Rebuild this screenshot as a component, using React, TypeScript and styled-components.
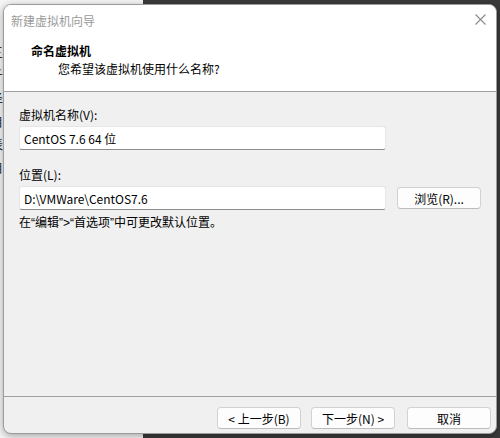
import styled, { createGlobalStyle } from "styled-components";

const GlobalStyle = createGlobalStyle`
  html, body {
    margin: 0;
    padding: 0;
    background: #3b3b3b;
  }
  body {
    font-family: "Noto Sans CJK SC", "Noto Sans", sans-serif;
    font-size: 12px;
    color: #000;
  }
`;

const backChars = ["(", "三", "斤", "泽", "自", "表", "自"];

const App = () => {
  return (
    <>
      <GlobalStyle />
      <Desktop>
        <BackWindow>
          {backChars.map((c, i) => (
            <BackLine key={i}>{c}</BackLine>
          ))}
        </BackWindow>

        <Dialog>
          <Header>
            <TitleBar>
              <TitleText>新建虚拟机向导</TitleText>
              <CloseButton aria-label="关闭">
                <svg width="11" height="11" viewBox="0 0 11 11">
                  <path
                    d="M0.5 0.5 L10.5 10.5 M10.5 0.5 L0.5 10.5"
                    stroke="#8a8a8a"
                    strokeWidth="1.1"
                    fill="none"
                  />
                </svg>
              </CloseButton>
            </TitleBar>
            <Heading>命名虚拟机</Heading>
            <SubHeading>您希望该虚拟机使用什么名称?</SubHeading>
          </Header>

          <Body>
            <Label>虚拟机名称(V):</Label>
            <Field>
              <TextBox defaultValue="CentOS 7.6 64 位" />
            </Field>

            <Label $top={16}>位置(L):</Label>
            <Field>
              <TextBox defaultValue="D:\VMWare\CentOS7.6" />
              <Button>浏览(R)...</Button>
            </Field>

            <Hint>
              在<Quote>“</Quote>编辑<Quote>”&gt;“</Quote>首选项<Quote>”</Quote>
              中可更改默认位置。
            </Hint>
          </Body>

          <Footer>
            <Button>&lt; 上一步(B)</Button>
            <Button>下一步(N) &gt;</Button>
            <Button $gapLeft={2}>取消</Button>
          </Footer>
        </Dialog>
      </Desktop>
    </>
  );
};

export default App;

const Desktop = styled.div`
  position: relative;
  width: 500px;
  height: 438px;
  overflow: hidden;
  background: #3b3b3b;
`;

const BackWindow = styled.div`
  position: absolute;
  left: -100px;
  top: -20px;
  width: 243px;
  height: 480px;
  background: #f7f7f7;
  padding-top: 42px;
  padding-left: 90px;
  box-sizing: border-box;
  display: flex;
  flex-direction: column;
  gap: 9px;
`;

const BackLine = styled.div`
  font-size: 13px;
  line-height: 14px;
  color: #333;
`;

const Dialog = styled.div`
  position: absolute;
  left: 3px;
  top: 4px;
  width: 494px;
  height: 430px;
  box-sizing: border-box;
  display: flex;
  flex-direction: column;
  background: #f0f0f0;
  border: 1px solid #9c9c9c;
  border-radius: 8px;
  overflow: hidden;
  box-shadow: 0 2px 8px rgba(0, 0, 0, 0.35);
`;

const Header = styled.div`
  background: #fff;
  height: 86px;
  border-bottom: 1px solid #a0a0a0;
  flex-shrink: 0;
`;

const TitleBar = styled.div`
  height: 30px;
  display: flex;
  align-items: center;
  justify-content: space-between;
  padding: 0 10px 0 7px;
`;

const TitleText = styled.span`
  color: #9a9a9a;
  font-size: 12px;
`;

const CloseButton = styled.div`
  width: 11px;
  height: 11px;
  display: flex;
  margin-top: -1px;
`;

const Heading = styled.div`
  margin-top: 7px;
  padding-left: 27px;
  font-weight: bold;
  line-height: 18px;
`;

const SubHeading = styled.div`
  padding-left: 54px;
  line-height: 18px;
`;

const Body = styled.div`
  flex: 1;
  padding: 14px 0 0 15px;
  display: flex;
  flex-direction: column;
`;

const Label = styled.div<{ $top?: number }>`
  margin-top: ${({ $top }) => $top ?? 0}px;
  margin-bottom: 2px;
  line-height: 18px;
`;

const Field = styled.div`
  display: flex;
  align-items: center;
  gap: 11px;
`;

const TextBox = styled.input`
  width: 367px;
  height: 24px;
  box-sizing: border-box;
  margin: 0;
  padding: 0 4px;
  background: #fff;
  border: 1px solid #e6e6e6;
  border-bottom: 1px solid #8d8d8d;
  border-radius: 3px;
  font-family: inherit;
  font-size: 12px;
  color: #000;
  outline: none;
`;

const Button = styled.button<{ $gapLeft?: number }>`
  width: 84px;
  height: 22px;
  box-sizing: border-box;
  margin: 0 0 0 ${({ $gapLeft }) => $gapLeft ?? 0}px;
  padding: 0;
  background: #fdfdfd;
  border: 1px solid #d2d2d2;
  border-bottom-color: #bcbcbc;
  border-radius: 4px;
  font-family: inherit;
  font-size: 12px;
  color: #000;
`;

const Hint = styled.div`
  margin-top: 3px;
  line-height: 18px;
`;

// curly quotes set in a Latin face so they stay narrow
const Quote = styled.span`
  font-family: "Liberation Sans", sans-serif;
`;

const Footer = styled.div`
  height: 37px;
  flex-shrink: 0;
  border-top: 1px solid #a0a0a0;
  display: flex;
  justify-content: flex-end;
  align-items: flex-start;
  gap: 10px;
  padding: 10px 5px 0 0;
  box-sizing: border-box;
`;
